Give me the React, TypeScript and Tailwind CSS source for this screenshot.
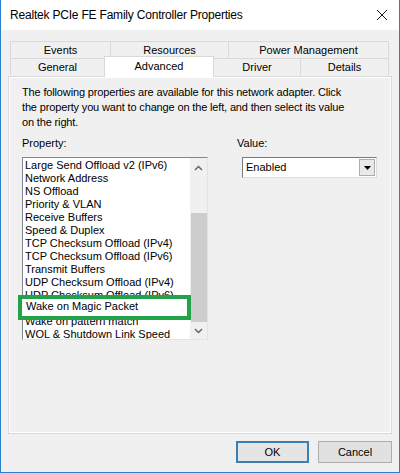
import React from "react";

const font = { fontFamily: '"Liberation Sans", Arial, sans-serif' };

const topTabs = [
  { label: "Events", w: "w-[100px]" },
  { label: "Resources", w: "w-[118px]" },
  { label: "Power Management", w: "w-[161px]" },
];

const properties = [
  "Large Send Offload v2 (IPv6)",
  "Network Address",
  "NS Offload",
  "Priority & VLAN",
  "Receive Buffers",
  "Speed & Duplex",
  "TCP Checksum Offload (IPv4)",
  "TCP Checksum Offload (IPv6)",
  "Transmit Buffers",
  "UDP Checksum Offload (IPv4)",
  "UDP Checksum Offload (IPv6)",
  "Wake on Magic Packet",
  "Wake on pattern match",
  "WOL & Shutdown Link Speed",
];

const Chevron = ({ up }: { up?: boolean }) => (
  <svg width="9" height="6" viewBox="0 0 9 6" className="block">
    <path
      d={up ? "M1 5 L4.5 1.5 L8 5" : "M1 1 L4.5 4.5 L8 1"}
      fill="none"
      stroke="#606060"
      strokeWidth="1.4"
    />
  </svg>
);

const App = () => {
  return (
    <div
      className="flex h-[473px] w-[400px] flex-col border-x border-b border-[#2a7fd0] bg-[#f0f0f0] text-[11px] text-black"
      style={font}
    >
      {/* title bar */}
      <div className="flex h-[30px] shrink-0 items-center justify-between bg-white pl-[9px] pr-[11px]">
        <span className="text-[12px] tracking-[-0.2px] text-black">
          Realtek PCIe FE Family Controller Properties
        </span>
        <svg width="12" height="12" viewBox="0 0 12 12">
          <path d="M1 1 L11 11 M11 1 L1 11" stroke="#1a1a1a" strokeWidth="1" />
        </svg>
      </div>

      <div className="flex flex-1 flex-col px-[7px] pt-[11px]">
        {/* tabs */}
        <div className="ml-[2px] flex h-[17px] text-[11px] leading-[16px]">
          {topTabs.map((t) => (
            <div
              key={t.label}
              className={`${t.w} border-l border-t border-[#d9d9d9] text-center last:border-r`}
            >
              {t.label}
            </div>
          ))}
        </div>
        <div className="relative z-10 ml-[2px] flex h-[17px] text-[11px] leading-[16px]">
          <div className="w-[94px] border-l border-t border-[#d9d9d9] text-center">General</div>
          <div className="-mt-[2px] h-[21px] w-[110px] border-x border-t border-[#d9d9d9] bg-white pt-[1px] text-center">
            Advanced
          </div>
          <div className="w-[86px] border-t border-[#d9d9d9] text-center">Driver</div>
          <div className="w-[89px] border-l border-r border-t border-[#d9d9d9] text-center">
            Details
          </div>
        </div>

        {/* panel */}
        <div className="relative mt-[1px] h-[358px] w-[384px] border border-[#d9d9d9] px-[13px] pt-[8px] shadow-[inset_1px_1px_0_#ffffff,inset_-1px_-1px_0_#ffffff]">
          <p className="text-[11px] leading-[15px] tracking-[-0.15px]">
            The following properties are available for this network adapter. Click
            <br />
            the property you want to change on the left, and then select its value
            <br />
            on the right.
          </p>

          <div className="mt-[6px] flex">
            <div className="w-[215px]">
              <div className="leading-[15px]">Property:</div>
              <div className="mt-[6px] flex h-[183px] w-[186px] overflow-hidden border border-[#828790] border-b-[#e3e3e3] border-r-[#e3e3e3] bg-white">
                <div className="flex-1 pl-[2px] pt-[1px]">
                  {properties.map((p) => (
                    <div key={p} className="h-[13px] whitespace-nowrap leading-[13px]">
                      {p}
                    </div>
                  ))}
                </div>
                <div className="flex w-[17px] flex-col items-center bg-[#f0f0f0]">
                  <div className="flex h-[17px] items-center justify-center pt-[3px]">
                    <Chevron up />
                  </div>
                  <div className="mt-[38px] h-[109px] w-[16px] bg-[#cdcdcd]" />
                  <div className="flex h-[17px] items-center justify-center">
                    <Chevron />
                  </div>
                </div>
              </div>
            </div>

            <div>
              <div className="leading-[15px]">Value:</div>
              <div className="ml-[5px] mt-[6px] flex h-[21px] w-[135px] items-center border border-[#7a7a7a] border-b-[#dcdcdc] border-r-[#dcdcdc] bg-white">
                <span className="flex-1 pl-[3px]">Enabled</span>
                <div className="mr-[1px] flex h-[17px] w-[16px] items-center justify-center border border-[#acacac] bg-[#e9e9e9]">
                  <svg width="7" height="4" viewBox="0 0 7 4">
                    <path d="M0 0 H7 L3.5 4 Z" fill="#000" />
                  </svg>
                </div>
              </div>
            </div>
          </div>

          {/* highlight */}
          <div className="absolute left-[9px] top-[218px] h-[25px] w-[173px] border-[4px] border-[#22a34a] bg-white pl-[4px] leading-[15px]">
            Wake on Magic Packet
          </div>
        </div>

        {/* buttons */}
        <div className="mt-[7px] flex justify-end gap-[9px] pr-[0px]">
          <button className="h-[22px] w-[73px] border-2 border-[#3c7fb1] bg-[#e5e5e5] text-[11px]">
            OK
          </button>
          <button className="h-[22px] w-[74px] border border-[#adadad] bg-[#e1e1e1] text-[11px]">
            Cancel
          </button>
        </div>
      </div>
    </div>
  );
};

export default App;
